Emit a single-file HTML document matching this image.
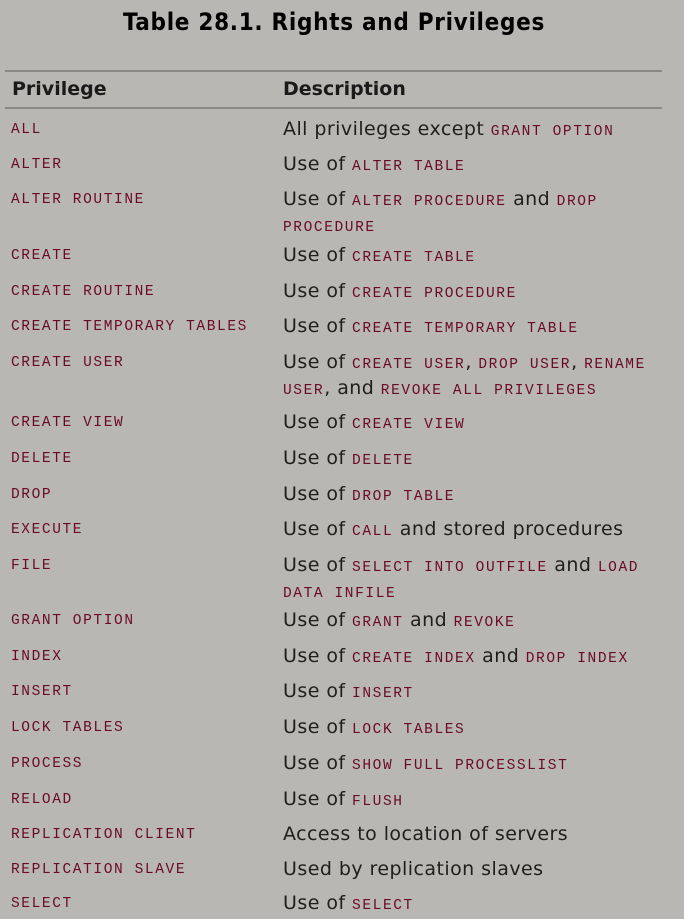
<!DOCTYPE html>
<html><head><meta charset="utf-8"><style>
body{margin:0;width:684px;height:919px;background:#b9b7b3;overflow:hidden;position:relative;font-family:"DejaVu Sans","Liberation Sans",sans-serif;color:#1e1e1e}
.t{position:absolute;top:8px;left:0;width:668px;text-align:center;font-weight:bold;font-size:24px;color:#000;font-family:"DejaVu Sans Condensed","DejaVu Sans",sans-serif;letter-spacing:0.7px}
.hr{position:absolute;left:5px;width:657px;height:2px;background:#8a8885}
.h{position:absolute;top:78px;font-weight:bold;font-size:19px;color:#1a1a1a}
.r{position:absolute;left:0;width:684px;font-size:19px;line-height:23px;letter-spacing:0.45px}
.a{position:absolute;left:11px;top:-2px}
.b{position:absolute;left:283px;top:0;width:392px}
code{font-family:"Liberation Mono",monospace;font-size:14.5px;letter-spacing:1.6px;color:#6a0a26}
</style></head><body>
<div class="t">Table 28.1. Rights and Privileges</div>
<div class="hr" style="top:70px"></div>
<div class="h" style="left:12px">Privilege</div>
<div class="h" style="left:283px">Description</div>
<div class="hr" style="top:107px"></div>

<div class="r" style="top:118px"><div class="a"><code>ALL</code></div><div class="b">All privileges except <code>GRANT OPTION</code></div></div>
<div class="r" style="top:153px"><div class="a"><code>ALTER</code></div><div class="b">Use of <code>ALTER TABLE</code></div></div>
<div class="r" style="top:188px"><div class="a"><code>ALTER ROUTINE</code></div><div class="b">Use of <code>ALTER PROCEDURE</code> and <code>DROP PROCEDURE</code></div></div>
<div class="r" style="top:244px"><div class="a"><code>CREATE</code></div><div class="b">Use of <code>CREATE TABLE</code></div></div>
<div class="r" style="top:280px"><div class="a"><code>CREATE ROUTINE</code></div><div class="b">Use of <code>CREATE PROCEDURE</code></div></div>
<div class="r" style="top:315px"><div class="a"><code>CREATE TEMPORARY TABLES</code></div><div class="b">Use of <code>CREATE TEMPORARY TABLE</code></div></div>
<div class="r" style="top:351px"><div class="a"><code>CREATE USER</code></div><div class="b">Use of <code>CREATE USER</code>, <code>DROP USER</code>, <code>RENAME USER</code>, and <code>REVOKE ALL PRIVILEGES</code></div></div>
<div class="r" style="top:411px"><div class="a"><code>CREATE VIEW</code></div><div class="b">Use of <code>CREATE VIEW</code></div></div>
<div class="r" style="top:447px"><div class="a"><code>DELETE</code></div><div class="b">Use of <code>DELETE</code></div></div>
<div class="r" style="top:483px"><div class="a"><code>DROP</code></div><div class="b">Use of <code>DROP TABLE</code></div></div>
<div class="r" style="top:518px"><div class="a"><code>EXECUTE</code></div><div class="b">Use of <code>CALL</code> and stored procedures</div></div>
<div class="r" style="top:554px"><div class="a"><code>FILE</code></div><div class="b">Use of <code>SELECT INTO OUTFILE</code> and <code>LOAD DATA INFILE</code></div></div>
<div class="r" style="top:609px"><div class="a"><code>GRANT OPTION</code></div><div class="b">Use of <code>GRANT</code> and <code>REVOKE</code></div></div>
<div class="r" style="top:645px"><div class="a"><code>INDEX</code></div><div class="b">Use of <code>CREATE INDEX</code> and <code>DROP INDEX</code></div></div>
<div class="r" style="top:680px"><div class="a"><code>INSERT</code></div><div class="b">Use of <code>INSERT</code></div></div>
<div class="r" style="top:716px"><div class="a"><code>LOCK TABLES</code></div><div class="b">Use of <code>LOCK TABLES</code></div></div>
<div class="r" style="top:752px"><div class="a"><code>PROCESS</code></div><div class="b">Use of <code>SHOW FULL PROCESSLIST</code></div></div>
<div class="r" style="top:788px"><div class="a"><code>RELOAD</code></div><div class="b">Use of <code>FLUSH</code></div></div>
<div class="r" style="top:823px"><div class="a"><code>REPLICATION CLIENT</code></div><div class="b">Access to location of servers</div></div>
<div class="r" style="top:858px"><div class="a"><code>REPLICATION SLAVE</code></div><div class="b">Used by replication slaves</div></div>
<div class="r" style="top:892px"><div class="a"><code>SELECT</code></div><div class="b">Use of <code>SELECT</code></div></div>
</body></html>
